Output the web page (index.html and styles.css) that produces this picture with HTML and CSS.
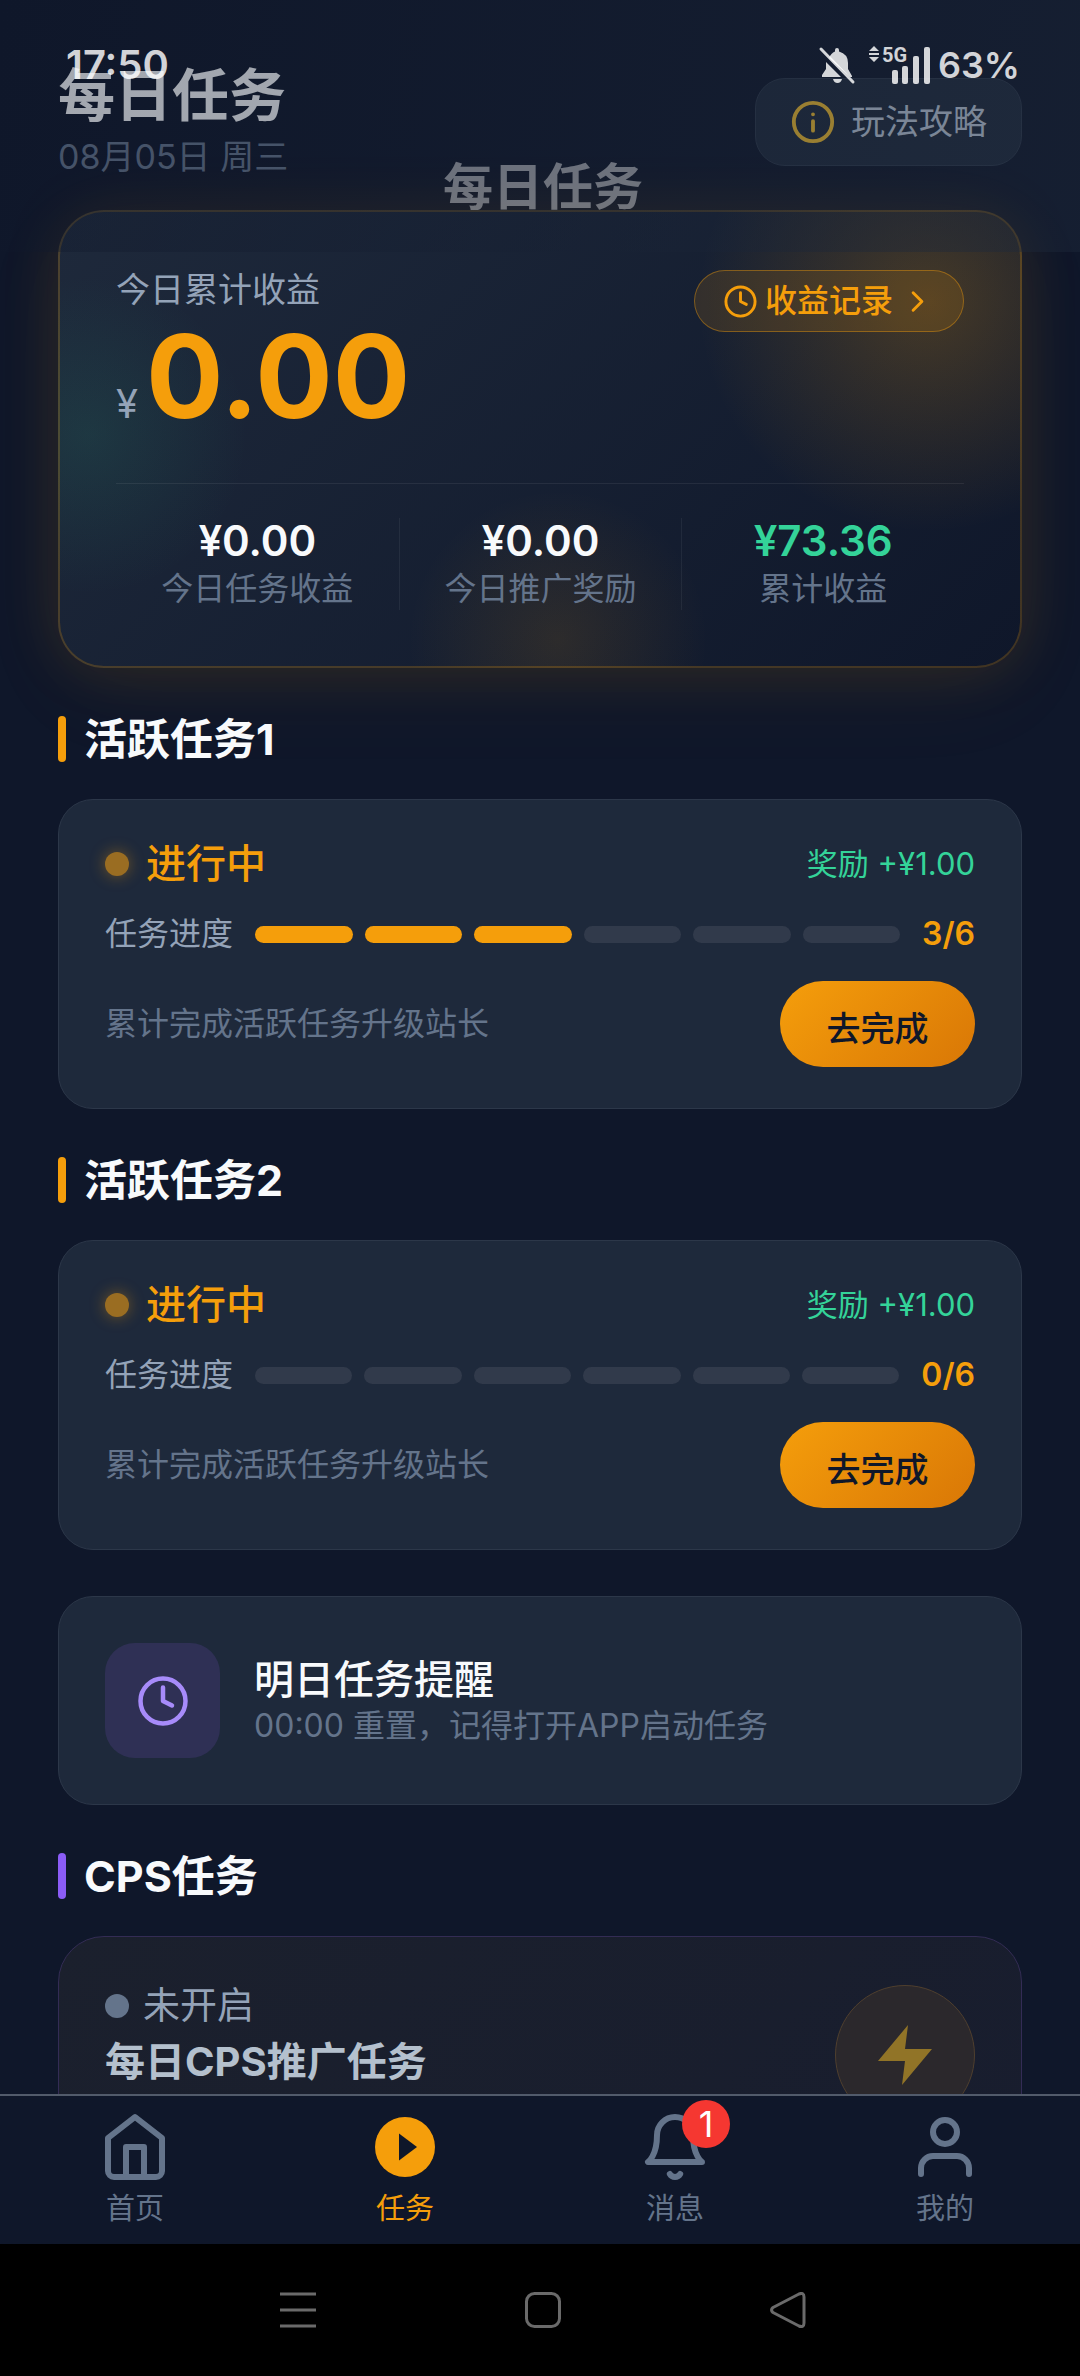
FILE: index.html
```html
<!DOCTYPE html>
<html lang="zh-CN">
<head>
<meta charset="utf-8">
<meta name="viewport" content="width=device-width, initial-scale=1">
<title>每日任务</title>
<link rel="stylesheet" href="styles.css">
</head>
<body>
<div class="app">
  <header class="app-bar">
    <div class="status-bar">
      <span class="clock">17:50</span>
      <div class="status-icons">
        <svg class="mute" viewBox="0 0 36 38" aria-label="静音"><path d="M10 12 Q12 7 16 5.500 V4 a2 2 0 0 1 4 0 V5.500 Q29 8 29 17 V23 L33 30 V31 H31 Z M7 16 L22 31 H3 V29 L7 23 Z M14 33 H23 Q22 37 18.500 37 T14 33Z"/><path class="slash" d="M2 3 L34 36"/></svg>
        <svg class="signal" viewBox="0 0 62 38" aria-label="5G 信号"><path d="M5 0 L10 5 H0 Z M0 7 H10 V9 H0 Z M0 11 H10 L5 16 Z"/><text x="13" y="16">5G</text><rect x="23" y="24" width="6" height="14" rx="2"/><rect x="33" y="20" width="6" height="18" rx="2"/><rect x="44" y="10" width="6" height="28" rx="2"/><rect x="55" y="1" width="6" height="37" rx="2"/></svg>
        <span>63%</span>
      </div>
    </div>
    <p class="app-bar-title">每日任务</p>
  </header>

  <main class="page">
    <div class="page-head">
      <div>
        <h1>每日任务</h1>
        <p class="date">08月05日 周三</p>
      </div>
      <button class="guide" type="button">
        <svg viewBox="0 0 24 24"><circle cx="12" cy="12" r="10"/><path d="M12 16.500v-5M12 8h.01"/></svg>
        玩法攻略
      </button>
    </div>

    <section class="income">
      <div class="income-top">
        <div>
          <p class="income-label">今日累计收益</p>
          <p class="amount"><span class="currency">¥</span><strong>0.00</strong></p>
        </div>
        <button class="records" type="button">
          <svg viewBox="0 0 24 24"><circle cx="12" cy="12" r="10"/><path d="M12 6v6l4 2"/></svg>
          <span>收益记录</span>
          <svg viewBox="0 0 24 24"><path d="m9 18 6-6-6-6"/></svg>
        </button>
      </div>
      <dl class="stats">
        <div class="stat"><dd>¥0.00</dd><dt>今日任务收益</dt></div>
        <div class="stat"><dd>¥0.00</dd><dt>今日推广奖励</dt></div>
        <div class="stat total"><dd>¥73.36</dd><dt>累计收益</dt></div>
      </dl>
    </section>

    <h2 class="section-title">活跃任务1</h2>
    <article class="card task">
      <div class="row">
        <span class="state active"><i class="dot"></i>进行中</span>
        <span class="reward">奖励 +¥1.00</span>
      </div>
      <div class="row progress">
        <span class="progress-label">任务进度</span>
        <div class="segments" role="progressbar" aria-label="任务进度" aria-valuemin="0" aria-valuemax="6" aria-valuenow="3">
          <i class="done"></i><i class="done"></i><i class="done"></i><i></i><i></i><i></i>
        </div>
        <span class="count">3/6</span>
      </div>
      <div class="row">
        <p class="note">累计完成活跃任务升级站长</p>
        <button class="go" type="button">去完成</button>
      </div>
    </article>

    <h2 class="section-title">活跃任务2</h2>
    <article class="card task">
      <div class="row">
        <span class="state active"><i class="dot"></i>进行中</span>
        <span class="reward">奖励 +¥1.00</span>
      </div>
      <div class="row progress">
        <span class="progress-label">任务进度</span>
        <div class="segments" role="progressbar" aria-label="任务进度" aria-valuemin="0" aria-valuemax="6" aria-valuenow="0">
          <i></i><i></i><i></i><i></i><i></i><i></i>
        </div>
        <span class="count">0/6</span>
      </div>
      <div class="row">
        <p class="note">累计完成活跃任务升级站长</p>
        <button class="go" type="button">去完成</button>
      </div>
    </article>

    <article class="card reminder">
      <span class="reminder-icon"><svg viewBox="0 0 24 24"><circle cx="12" cy="12" r="10"/><path d="M12 6v6l4 2"/></svg></span>
      <div>
        <h3>明日任务提醒</h3>
        <p class="note">00:00 重置，记得打开APP启动任务</p>
      </div>
    </article>

    <h2 class="section-title cps-title">CPS任务</h2>
    <article class="cps">
      <div>
        <span class="state idle"><i class="dot"></i>未开启</span>
        <h3>每日CPS推广任务</h3>
      </div>
      <span class="bolt"><svg viewBox="0 0 24 24"><path d="M13 2 3 14h9l-1 8 10-12h-9z"/></svg></span>
    </article>
  </main>

  <nav class="tabs">
    <a href="#home"><svg viewBox="0 0 24 24"><path d="m3 9 9-7 9 7v11a2 2 0 0 1-2 2H5a2 2 0 0 1-2-2z"/><path d="M9 22V12h6v10"/></svg>首页</a>
    <a href="#tasks" class="current" aria-current="page"><svg viewBox="0 0 24 24"><circle class="disc" cx="12" cy="12" r="10"/><path class="play" d="M10 7.500v9l6-4.500z"/></svg>任务</a>
    <a href="#messages"><span class="with-badge"><svg viewBox="0 0 24 24"><path d="M18 8A6 6 0 0 0 6 8c0 7-3 9-3 9h18s-3-2-3-9"/><path d="M13.730 21a2 2 0 0 1-3.460 0"/></svg><b class="badge">1</b></span>消息</a>
    <a href="#me"><svg viewBox="0 0 24 24"><path d="M20 21v-2a4 4 0 0 0-4-4H8a4 4 0 0 0-4 4v2"/><circle cx="12" cy="7" r="4"/></svg>我的</a>
  </nav>

  <div class="system-nav">
    <button type="button" aria-label="最近任务"><svg viewBox="0 0 36 36"><path d="M0 2h36M0 18h36M0 34h36"/></svg></button>
    <button type="button" aria-label="主屏幕"><svg viewBox="0 0 36 36"><rect x="1.500" y="1.500" width="33" height="33" rx="8"/></svg></button>
    <button type="button" aria-label="返回"><svg viewBox="0 0 36 36"><path d="M29 2 3 15.500q-3 2.500 0 5L29 34q5 2 5-3V5q0-5-5-3z"/></svg></button>
  </div>
</div>
</body>
</html>
```
FILE: styles.css
```css
:root {
  --bg: #0f172a;
  --card: #1e293b;
  --line: #2c3749;
  --amber: #f59e0b;
  --green: #34d399;
  --muted: #94a3b8;
  --faint: #64748b;
}

* { box-sizing: border-box; }

body, h1, h2, h3, p, dl, dd { margin: 0; }

body {
  background: #000;
  color: #f8fafc;
  font-family: Inter, "Noto Sans CJK SC", sans-serif;
  font-size: 32px;
  line-height: 42px;
}

button {
  border: 0;
  padding: 0;
  background: none;
  color: inherit;
  font: inherit;
  cursor: pointer;
}

svg {
  display: block;
  flex: none;
  fill: none;
  stroke: currentColor;
  stroke-width: 2;
  stroke-linecap: round;
  stroke-linejoin: round;
}

.app {
  position: relative;
  display: flex;
  flex-direction: column;
  height: 100vh;
  overflow: hidden;
  background: var(--bg);
}

/* translucent bar over the scrolled page */
.app-bar {
  position: absolute;
  inset: 0 0 auto;
  z-index: 2;
  padding: 40px 60px 35px 66px;
  background: linear-gradient(100deg, rgba(15, 23, 42, .36), rgba(30, 41, 59, .42));
  pointer-events: none;
}

.status-bar, .status-icons { display: flex; align-items: center; }

.status-bar {
  justify-content: space-between;
  height: 50px;
  color: rgba(255, 255, 255, .82);
  font-size: 40px;
  font-weight: 600;
}

.status-icons { font-size: 36px; }
.status-icons svg { overflow: visible; fill: currentColor; stroke: none; }
.mute { width: 36px; height: 38px; margin-right: 14px; }
.status-icons .slash { stroke: currentColor; stroke-width: 3; }
.signal { width: 62px; height: 38px; margin-right: 7px; }
.signal text { font: 700 20px Roboto, sans-serif; }

.app-bar-title {
  margin-top: 67px;
  color: rgba(255, 255, 255, .38);
  font-size: 50px;
  font-weight: 700;
  line-height: 60px;
  text-align: center;
}

.page {
  flex: 1;
  min-height: 0;
  overflow: hidden;
  padding: 63px 58px 0;
}

.page-head {
  display: flex;
  align-items: center;
  justify-content: space-between;
  margin-bottom: 30px;
}

h1 { font-size: 57px; font-weight: 700; line-height: 66px; }
.date { margin-top: 5px; color: var(--faint); font-size: 34px; line-height: 46px; }

.guide {
  display: flex;
  align-items: center;
  gap: 15px;
  height: 88px;
  padding: 0 34px;
  border: 1px solid var(--line);
  border-radius: 30px;
  background: var(--card);
  color: #bcc8d8;
  font-size: 34px;
}
.guide svg { width: 46px; color: #f0bc2e; }

.income {
  padding: 56px;
  border: 2px solid rgba(245, 158, 11, .22);
  border-radius: 46px;
  background:
    radial-gradient(circle at 870px 92px, rgba(245, 158, 11, .22), rgba(245, 158, 11, .12) 100px, transparent 230px),
    radial-gradient(circle at 30px 225px, rgba(52, 211, 153, .1), transparent 160px),
    radial-gradient(circle at 500px 430px, rgba(245, 158, 11, .11), transparent 150px),
    linear-gradient(135deg, #1e293b, #0f172a);
  background-origin: border-box;
  box-shadow: 0 0 60px rgba(245, 158, 11, .12), 0 24px 96px rgba(245, 158, 11, .05);
}

.income-top {
  display: flex;
  align-items: flex-start;
  justify-content: space-between;
  padding-bottom: 47px;
  border-bottom: 1px solid rgba(255, 255, 255, .07);
}

.income-label { color: var(--muted); font-size: 34px; line-height: 44px; }

.amount {
  display: flex;
  align-items: baseline;
  gap: 8px;
  margin-top: 6px;
  line-height: 118px;
}
.amount strong { color: var(--amber); font-size: 115px; font-weight: 700; }
.currency { color: var(--muted); font-size: 40px; line-height: 40px; }

.records {
  display: flex;
  align-items: center;
  gap: 7px;
  height: 62px;
  margin-top: 2px;
  padding: 0 28px;
  border: 1px solid rgba(245, 158, 11, .4);
  border-radius: 31px;
  background: rgba(245, 158, 11, .13);
  color: var(--amber);
  font-weight: 500;
}
.records svg { width: 35px; }

.stats {
  display: grid;
  grid-template-columns: repeat(3, 1fr);
  padding-top: 34px;
  text-align: center;
}
.stat { display: flex; flex-direction: column; gap: 4px; }
.stat + .stat { border-left: 1px solid rgba(255, 255, 255, .06); }
.stat dd { font-size: 42px; font-weight: 600; line-height: 46px; }
.stat dt { color: var(--faint); }
.total dd { color: var(--green); }

.section-title {
  display: flex;
  align-items: center;
  gap: 18px;
  margin: 48px 0 37px;
  font-size: 43px;
  font-weight: 700;
  line-height: 46px;
}
.section-title::before {
  content: "";
  width: 8px;
  height: 46px;
  border-radius: 4px;
  background: var(--amber);
}
.cps-title::before { background: #8b5cf6; }

.card {
  border: 1px solid var(--line);
  border-radius: 35px;
  background: var(--card);
}

.task { display: grid; gap: 26px; padding: 41px 46px; }

.row { display: flex; align-items: center; justify-content: space-between; }

.state { display: flex; align-items: center; gap: 14px; }
.dot { width: 24px; height: 24px; border-radius: 50%; }
.active { gap: 17px; color: var(--amber); font-size: 40px; font-weight: 500; line-height: 46px; }
.active .dot { background: #9a6d22; box-shadow: 0 0 16px rgba(245, 158, 11, .4); }
.idle { color: var(--muted); font-size: 37px; line-height: 42px; }
.idle .dot { background: var(--faint); }

.reward { color: var(--green); font-size: 31px; }

.progress { gap: 22px; }
.progress-label { color: var(--muted); }
.segments { display: flex; flex: 1; gap: 12px; }
.segments i { flex: 1; height: 17px; border-radius: 9px; background: #313a4b; }
.segments .done { background: var(--amber); }
.count { color: var(--amber); font-weight: 600; }

.note { color: var(--faint); }

.go {
  width: 195px;
  height: 86px;
  padding-top: 10px;
  border-radius: 43px;
  background: linear-gradient(135deg, #f59e0b, #d97706);
  color: #0f172a;
  font-size: 34px;
  font-weight: 500;
}

.reminder {
  display: flex;
  align-items: center;
  gap: 34px;
  margin-top: 46px;
  padding: 46px;
}
.reminder-icon {
  display: grid;
  place-items: center;
  width: 115px;
  height: 115px;
  border-radius: 30px;
  background: #2f3055;
  color: #a78bfa;
}
.reminder-icon svg { width: 54px; }
.reminder h3 { font-size: 40px; font-weight: 500; line-height: 50px; }

.cps {
  display: flex;
  justify-content: space-between;
  min-height: 240px;
  padding: 48px 46px;
  border: 1px solid #332c55;
  border-radius: 46px;
  background: linear-gradient(135deg, #1b202d, #181d2e);
}
.cps h3 { margin-top: 7px; color: #b4c0cd; font-size: 40px; font-weight: 700; line-height: 56px; }

.bolt {
  display: grid;
  place-items: center;
  width: 140px;
  height: 140px;
  border: 1px solid #4f3f2e;
  border-radius: 50%;
  background: #2b282c;
  color: #917427;
}
.bolt svg { width: 72px; fill: currentColor; stroke: none; }

.tabs {
  display: grid;
  grid-template-columns: repeat(4, 1fr);
  padding: 15px 0 17px;
  border-top: 2px solid #525b6b;
  background: var(--bg);
}
.tabs a {
  display: flex;
  flex-direction: column;
  align-items: center;
  gap: 8px;
  color: var(--faint);
  font-size: 29px;
  line-height: 36px;
  text-decoration: none;
}
.tabs svg { width: 72px; }
.tabs .current { color: var(--amber); }
.disc { fill: currentColor; stroke: none; }
.play { fill: var(--bg); stroke: none; }

.with-badge { position: relative; }
.badge {
  position: absolute;
  top: -11px;
  right: -19px;
  width: 48px;
  height: 48px;
  border-radius: 50%;
  background: #f53731;
  color: #fff;
  font-size: 36px;
  font-weight: 400;
  line-height: 48px;
  text-align: center;
}

.system-nav {
  display: flex;
  align-items: center;
  justify-content: space-between;
  height: 132px;
  padding: 0 274px 0 280px;
  background: #000;
  color: #6a6a6a;
}
.system-nav svg { width: 36px; stroke-width: 3; stroke-linecap: butt; }
```
